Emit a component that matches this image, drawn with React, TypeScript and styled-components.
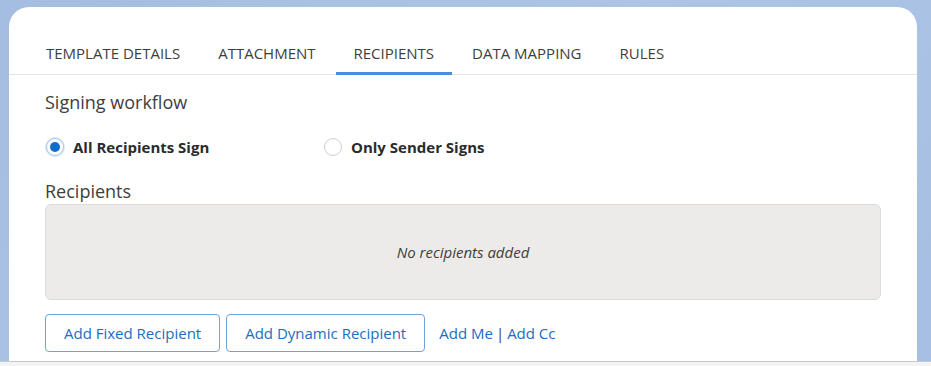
import React, { useState } from "react";
import styled, { createGlobalStyle } from "styled-components";

const GlobalStyle = createGlobalStyle`
  html, body { margin: 0; padding: 0; }
  body {
    background: #a9c1e2;
    overflow: hidden;
    font-family: "Open Sans", "Noto Sans", "Liberation Sans", sans-serif;
  }
`;

const Page = styled.div`
  width: 931px;
  height: 366px;
  display: flex;
  flex-direction: column;
  background: linear-gradient(135deg, #a4bde0 0%, #adc4e4 50%, #a6bfe2 100%);
`;

const Stage = styled.div`
  flex: 1;
  display: flex;
  padding: 7px 14px 0 9px;
  min-height: 0;
`;

const Card = styled.div`
  flex: 1;
  background: #ffffff;
  border-radius: 20px 20px 0 0;
  display: flex;
  flex-direction: column;
  overflow: hidden;
`;

const Footer = styled.div`
  height: 4px;
  border-top: 1px solid #c6c9cd;
  background: #f3f3f3;
`;

const TabBar = styled.div`
  display: flex;
  margin-top: 24px;
  padding-left: 19px;
  border-bottom: 1px solid #e5e5e5;
`;

const Tab = styled.div<{ $active?: boolean }>`
  height: 44px;
  box-sizing: border-box;
  padding: 3px 18px 0;
  margin-right: 2px;
  display: flex;
  align-items: center;
  font-size: 15px;
  color: #3e3e3c;
  border-bottom: 3px solid ${(p) => (p.$active ? "#4a8edb" : "transparent")};
  margin-bottom: -1px;
  cursor: pointer;
`;

const Body = styled.div`
  padding: 14px 36px 0 36px;
  display: flex;
  flex-direction: column;
`;

const Heading = styled.div`
  font-size: 18px;
  line-height: 26px;
  color: #3e3e3c;
`;

const RadioRow = styled.div`
  display: flex;
  margin-top: 20px;
  height: 24px;
  align-items: center;
`;

const Option = styled.label<{ $width?: number }>`
  display: flex;
  align-items: center;
  gap: 9px;
  width: ${(p) => (p.$width ? `${p.$width}px` : "auto")};
  padding-left: 1px;
  font-size: 15px;
  font-weight: 700;
  color: #2b2b2b;
  cursor: pointer;
`;

const RadioCircle = styled.span<{ $checked?: boolean }>`
  width: 18px;
  height: 18px;
  box-sizing: border-box;
  border-radius: 50%;
  border: 1px solid ${(p) => (p.$checked ? "#a9c6ea" : "#cfcfcf")};
  background: #fff;
  display: flex;
  align-items: center;
  justify-content: center;
  box-shadow: ${(p) => (p.$checked ? "0 0 0 1px #d9e7f7" : "none")};
  &::after {
    content: "";
    width: 10px;
    height: 10px;
    border-radius: 50%;
    background: ${(p) => (p.$checked ? "#0f6ccb" : "transparent")};
  }
`;

const SectionHeading = styled(Heading)`
  margin-top: 19px;
`;

const EmptyBox = styled.div`
  height: 96px;
  box-sizing: border-box;
  background: #ecebea;
  border: 1px solid #dddbda;
  border-radius: 6px;
  display: flex;
  align-items: center;
  justify-content: center;
  font-size: 15px;
  font-style: italic;
  color: #3e3e3c;
`;

const Actions = styled.div`
  margin-top: 14px;
  display: flex;
  align-items: center;
  gap: 6px;
`;

const OutlineButton = styled.button`
  height: 38px;
  box-sizing: border-box;
  padding: 0 18px;
  background: #fff;
  border: 1px solid #6fa3db;
  border-radius: 4px;
  color: #1a6ec2;
  font-family: inherit;
  font-size: 15px;
  cursor: pointer;
`;

const Links = styled.div`
  margin-left: 8px;
  display: flex;
  align-items: center;
  font-size: 15px;
  color: #3e3e3c;
`;

const Link = styled.a`
  color: #1a6ec2;
  text-decoration: none;
  cursor: pointer;
`;

const Sep = styled.span`
  margin: 0 3px;
  color: #3e3e3c;
`;

const tabs = ["TEMPLATE DETAILS", "ATTACHMENT", "RECIPIENTS", "DATA MAPPING", "RULES"];

export default function App() {
  const [active, setActive] = useState("RECIPIENTS");
  const [workflow, setWorkflow] = useState("all");
  return (
    <>
      <GlobalStyle />
      <Page>
        <Stage>
          <Card>
            <TabBar>
              {tabs.map((t) => (
                <Tab key={t} $active={t === active} onClick={() => setActive(t)}>
                  {t}
                </Tab>
              ))}
            </TabBar>
            <Body>
              <Heading>Signing workflow</Heading>
              <RadioRow>
                <Option $width={277} onClick={() => setWorkflow("all")}>
                  <RadioCircle $checked={workflow === "all"} />
                  All Recipients Sign
                </Option>
                <Option onClick={() => setWorkflow("sender")}>
                  <RadioCircle $checked={workflow === "sender"} />
                  Only Sender Signs
                </Option>
              </RadioRow>
              <SectionHeading>Recipients</SectionHeading>
              <EmptyBox>No recipients added</EmptyBox>
              <Actions>
                <OutlineButton>Add Fixed Recipient</OutlineButton>
                <OutlineButton>Add Dynamic Recipient</OutlineButton>
                <Links>
                  <Link>Add Me</Link>
                  <Sep>|</Sep>
                  <Link>Add Cc</Link>
                </Links>
              </Actions>
            </Body>
          </Card>
        </Stage>
        <Footer />
      </Page>
    </>
  );
}
